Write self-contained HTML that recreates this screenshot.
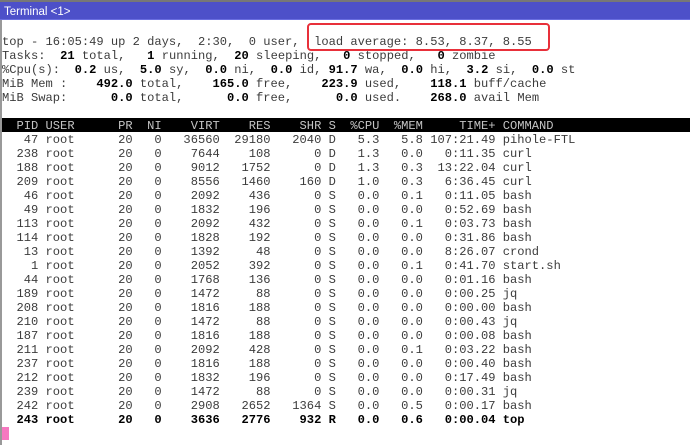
<!DOCTYPE html>
<html>
<head>
<meta charset="utf-8">
<style>
html,body{margin:0;padding:0;background:#fff}
#w{position:relative;width:690px;height:445px;overflow:hidden;background:#fff}
#tb{position:absolute;left:0;top:0;width:690px;height:20px;background:#4d50c9;border-top:2px solid #777;box-sizing:border-box;border-bottom:1px solid #6a6ee0}
#tt{position:absolute;left:4px;top:3px;font:11.5px/15px "Liberation Sans",sans-serif;color:#fff}
#lb{position:absolute;left:0;top:20px;width:2px;height:425px;background:#999}
#hd{position:absolute;left:2px;top:118px;width:688px;height:14px;background:#000}
pre{position:absolute;left:2px;top:35px;margin:0;font:12.1px/14px "Liberation Mono",monospace;color:#3c3c3c;white-space:pre}
b{color:#000;font-weight:bold}
.h{color:#c4c4c4}
#rb{position:absolute;left:307px;top:23px;width:243px;height:28px;border:2px solid #e8303a;border-radius:4px;box-sizing:border-box}
#cu{position:absolute;left:2px;top:427px;width:7px;height:13px;background:#f678c0}
</style>
</head>
<body>
<div id="w">
<div id="tb"><div id="tt">Terminal &lt;1&gt;</div></div>
<div id="lb"></div>
<div id="hd"></div>
<pre>top - 16:05:49 up 2 days,  2:30,  0 user,  load average: 8.53, 8.37, 8.55
Tasks: <b> 21</b> total,  <b> 1</b> running, <b> 20</b> sleeping,  <b> 0</b> stopped,  <b> 0</b> zombie
%Cpu(s): <b> 0.2</b> us, <b> 5.0</b> sy, <b> 0.0</b> ni, <b> 0.0</b> id, <b>91.7</b> wa, <b> 0.0</b> hi, <b> 3.2</b> si, <b> 0.0</b> st
MiB Mem : <b>   492.0</b> total, <b>   165.0</b> free, <b>   223.9</b> used, <b>   118.1</b> buff/cache
MiB Swap: <b>     0.0</b> total, <b>     0.0</b> free, <b>     0.0</b> used. <b>   268.0</b> avail Mem

<span class="h">  PID USER      PR  NI    VIRT    RES    SHR S  %CPU  %MEM     TIME+ COMMAND</span>
   47 root      20   0   36560  29180   2040 D   5.3   5.8 107:21.49 pihole-FTL
  238 root      20   0    7644    108      0 D   1.3   0.0   0:11.35 curl
  188 root      20   0    9012   1752      0 D   1.3   0.3  13:22.04 curl
  209 root      20   0    8556   1460    160 D   1.0   0.3   6:36.45 curl
   46 root      20   0    2092    436      0 S   0.0   0.1   0:11.05 bash
   49 root      20   0    1832    196      0 S   0.0   0.0   0:52.69 bash
  113 root      20   0    2092    432      0 S   0.0   0.1   0:03.73 bash
  114 root      20   0    1828    192      0 S   0.0   0.0   0:31.86 bash
   13 root      20   0    1392     48      0 S   0.0   0.0   8:26.07 crond
    1 root      20   0    2052    392      0 S   0.0   0.1   0:41.70 start.sh
   44 root      20   0    1768    136      0 S   0.0   0.0   0:01.16 bash
  189 root      20   0    1472     88      0 S   0.0   0.0   0:00.25 jq
  208 root      20   0    1816    188      0 S   0.0   0.0   0:00.00 bash
  210 root      20   0    1472     88      0 S   0.0   0.0   0:00.43 jq
  187 root      20   0    1816    188      0 S   0.0   0.0   0:00.08 bash
  211 root      20   0    2092    428      0 S   0.0   0.1   0:03.22 bash
  237 root      20   0    1816    188      0 S   0.0   0.0   0:00.40 bash
  212 root      20   0    1832    196      0 S   0.0   0.0   0:17.49 bash
  239 root      20   0    1472     88      0 S   0.0   0.0   0:00.31 jq
  242 root      20   0    2908   2652   1364 S   0.0   0.5   0:00.17 bash
<b>  243 root      20   0    3636   2776    932 R   0.0   0.6   0:00.04 top</b></pre>
<div id="rb"></div>
<div id="cu"></div>
</div>
</body>
</html>
